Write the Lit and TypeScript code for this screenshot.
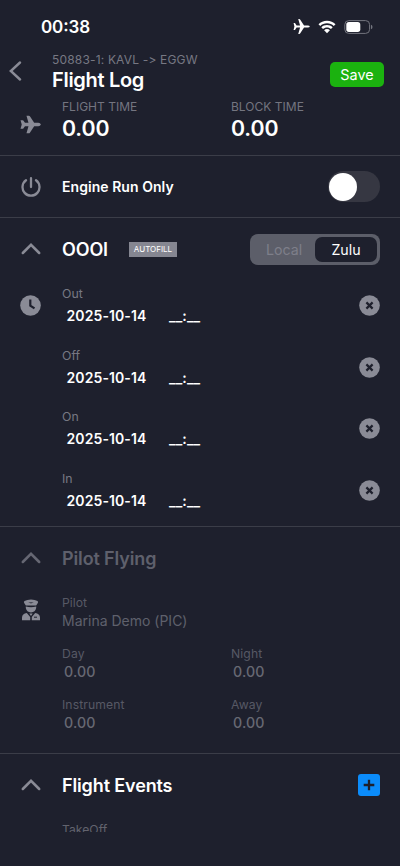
import { LitElement, html, svg, css } from "lit";
import { customElement, property, state } from "lit/decorators.js";

const plane = svg`<path d="M21 10H16.200L11.300 2.600Q10.900 2 10.200 2H7.400L9.700 10H5.700L3.800 7.500Q3.600 7.200 3.200 7.200H.6L2 12L.6 16.800H3.200Q3.600 16.800 3.800 16.500L5.700 14H9.700L7.400 22H10.200Q10.900 22 11.300 21.400L16.200 14H21Q23.200 13.700 23.900 12Q23.200 10.300 21 10Z"/>`;

const thinPlane = svg`<path d="M21 10.500H15.600L10 2Q9.600 1.400 8.900 1.400H7.400L10 10.500H5.100L3 7.300Q2.800 7 2.400 7H.8L2 12L.8 17H2.400Q2.800 17 3 16.700L5.100 13.500H10L7.400 22.600H8.900Q9.600 22.600 10 22L15.600 13.500H21Q23.200 13.300 23.800 12Q23.200 10.700 21 10.500Z"/>`;

const chevronUp = html`<svg class="chevron" viewBox="0 0 20 12"><path d="M1.800 10L10 1.800L18.200 10"/></svg>`;

@customElement("log-time")
export class LogTime extends LitElement {
  @property() label = "";
  @property() value = "";

  static styles = css`
    :host { display: block; }
    .label { font-size: 12.2px; line-height: 17px; letter-spacing: 0.1px; color: #575965; }
    .value { font-size: 14.2px; line-height: 20px; font-weight: 500; letter-spacing: 0.1px; padding-left: 2px; color: #676873; }
  `;

  render() {
    return html`<div class="label">${this.label}</div><div class="value">${this.value}</div>`;
  }
}

@customElement("app-root")
export class AppRoot extends LitElement {
  @state() zone = "Zulu";

  static styles = css`
    :host {
      display: flex;
      flex-direction: column;
      height: 866px;
      overflow: hidden;
      background: #1e202d;
      color: #fff;
      font-family: Inter, sans-serif;
      font-feature-settings: "calt" 0;
    }
    * { box-sizing: border-box; }
    svg { display: block; fill: #8a8b96; flex: none; }
    section { border-bottom: 1px solid #3b3d48; flex: none; }
    .status { display: flex; align-items: center; height: 53px; padding: 0 27px 0 41px; flex: none; }
    .clock { font-size: 17px; font-weight: 600; letter-spacing: -0.1px; flex: 1; font-feature-settings: "calt" 1; }
    .status svg { fill: #fff; }
    .plane-small { width: 17px; height: 17px; margin-right: 8px; }
    .wifi { width: 18px; height: 14px; margin-right: 8px; }
    .battery { width: 29px; height: 14px; }
    .battery .shell { fill: none; stroke: #74757f; }
    .battery .tip { fill: #74757f; }
    .header { display: flex; height: 47px; padding: 0 16px 0 9px; flex: none; }
    .back { width: 13px; height: 20px; margin: 8px 30px 0 0; fill: none; stroke: #8a8b96; stroke-width: 2.4; stroke-linecap: round; }
    .heading { flex: 1; }
    .sub { font-size: 12px; line-height: 14px; letter-spacing: 0.17px; color: #777883; white-space: nowrap; }
    .title { font-size: 20px; line-height: 26px; font-weight: 600; letter-spacing: -0.3px; }
    .save { width: 54px; height: 25px; margin-top: 8.500px; border-radius: 5px; background: #1bb20f; font-size: 14.4px; line-height: 25px; text-align: center; }
    .row { display: grid; grid-template-columns: 42px 1fr auto; padding: 0 20px; }
    .totals { height: 56px; }
    .totals svg { width: 21px; height: 21px; margin-top: 14px; }
    .pair { display: grid; grid-template-columns: 169px 1fr; }
    .caption { font-size: 12px; line-height: 14px; letter-spacing: 0.02px; color: #747580; }
    .total { font-size: 21.3px; line-height: 29px; font-weight: 600; letter-spacing: -0.1px; }
    .engine { height: 62px; align-items: center; }
    .power { width: 20px; height: 20px; margin-left: 1px; fill: none; stroke: #8a8b96; stroke-width: 2.3; stroke-linecap: round; }
    .engine-label { font-size: 14px; font-weight: 600; letter-spacing: 0.05px; }
    .switch { width: 52px; height: 31px; border-radius: 16px; background: #363742; padding: 1.500px 1px; }
    .knob { width: 28px; height: 28px; border-radius: 50%; background: #fff; }
    .head { height: 62px; align-items: center; }
    .chevron { width: 20px; height: 12px; margin-left: 1px; fill: none; stroke: #8a8b96; stroke-width: 2.5; stroke-linecap: round; }
    .section-title { display: flex; align-items: center; font-size: 18px; font-weight: 600; letter-spacing: -0.13px; }
    .autofill { width: 48px; height: 15px; margin-left: 21px; background: #858691; font-size: 8px; line-height: 15px; font-weight: 400; letter-spacing: 0; text-align: center; }
    .segments { display: flex; width: 130px; height: 31px; padding: 3px; border-radius: 8px; background: #5c5e69; font-size: 14.2px; line-height: 25px; text-align: center; }
    .segment { flex: 1; color: #7e7f8a; }
    .segment.on { flex: none; width: 62px; border-radius: 7px; background: #1e202d; color: #fff; }
    .oooi { height: 309px; }
    .event { height: 61.5px; }
    .event-icon { padding-top: 15px; }
    .disc { width: 21px; height: 21px; }
    .disc .mark { fill: none; stroke: #1e202d; stroke-width: 2.2; }
    .clear { padding-top: 15px; }
    .event-label { font-size: 12.3px; line-height: 17px; padding-top: 5px; color: #777883; }
    .stamp { display: grid; grid-template-columns: 102.5px 1fr; padding-left: 4.5px; font-size: 14px; line-height: 27px; font-weight: 600; letter-spacing: 0.1px; }
    .pilot { height: 227px; }
    .pilot .section-title { color: #5f606c; }
    .pilot .chevron { stroke: #666773; }
    .officer { width: 18px; height: 22px; margin: 10px 0 0 2px; }
    .who { padding-top: 6px; font-size: 12.2px; line-height: 16px; color: #575965; }
    .name { font-size: 14px; line-height: 19px; color: #5f606c; margin-bottom: 14.5px; }
    .grid { display: grid; grid-template-columns: 169px 1fr; row-gap: 14.3px; }
    .events { height: 78px; overflow: hidden; flex: none; }
    .add { width: 22px; height: 22px; fill: #0b8cfb; }
    .add .mark { fill: none; stroke: #1e202d; stroke-width: 2.3; }
    .takeoff { padding-left: 62px; margin-top: 5px; font-size: 12.2px; line-height: 17px; color: #62636e; }
  `;

  renderEvent(label: string, first: boolean) {
    return html`
      <div class="row event">
        <div class="event-icon">
          ${first
            ? html`<svg class="disc" viewBox="0 0 21 21"><circle cx="10.5" cy="10.5" r="10.3"/><path class="mark" d="M10.3 4.5V10.6L14.5 13.4"/></svg>`
            : ""}
        </div>
        <div>
          <div class="event-label">${label}</div>
          <div class="stamp"><span>2025-10-14</span><span>__:__</span></div>
        </div>
        <div class="clear">
          <svg class="disc" viewBox="0 0 21 21"><circle cx="10.5" cy="10.5" r="10.3"/><path class="mark" d="M7.4 7.4L13.6 13.6M13.6 7.4L7.4 13.6"/></svg>
        </div>
      </div>`;
  }

  render() {
    return html`
      <div class="status">
        <div class="clock">00:38</div>
        <svg class="plane-small" viewBox="0 0 24 24">${thinPlane}</svg>
        <svg class="wifi" viewBox="0 0 18 14">
          <path d="M9 .8C5.6.8 2.700 2.100.5 4.200L2.200 6C4 4.300 6.300 3.300 9 3.300S14 4.300 15.800 6L17.500 4.200C15.300 2.100 12.400.8 9 .8Z"/>
          <path d="M9 5C6.800 5 4.800 5.900 3.300 7.200L5 9C6.100 8 7.400 7.400 9 7.400S11.900 8 13 9L14.700 7.200C13.200 5.900 11.200 5 9 5Z"/>
          <path d="M9 9.100C7.900 9.100 6.900 9.500 6.100 10.200L9 13.200L11.900 10.200C11.100 9.500 10.100 9.100 9 9.100Z"/>
        </svg>
        <svg class="battery" viewBox="0 0 29 14">
          <rect class="shell" x=".8" y=".6" width="24.800" height="12.800" rx="4"/>
          <rect x="2.300" y="2.100" width="14" height="9.800" rx="2.600"/>
          <path class="tip" d="M27 4.800Q28.500 5.300 28.500 7T27 9.200Z"/>
        </svg>
      </div>

      <div class="header">
        <svg class="back" viewBox="0 0 13 20"><path d="M11 1.500L1.800 10L11 18.500"/></svg>
        <div class="heading">
          <div class="sub">50883-1: KAVL -&gt; EGGW</div>
          <div class="title">Flight Log</div>
        </div>
        <div class="save">Save</div>
      </div>

      <section class="row totals">
        <svg viewBox="0 0 24 24">${plane}</svg>
        <div class="pair">
          <div><div class="caption">FLIGHT TIME</div><div class="total">0.00</div></div>
          <div><div class="caption">BLOCK TIME</div><div class="total">0.00</div></div>
        </div>
      </section>

      <section class="row engine">
        <svg class="power" viewBox="0 0 20 20"><path d="M10 1.200V10M5 3.300A8.500 8.500 0 1 0 15 3.300"/></svg>
        <div class="engine-label">Engine Run Only</div>
        <div class="switch"><div class="knob"></div></div>
      </section>

      <section class="oooi">
        <div class="row head">
          ${chevronUp}
          <div class="section-title">OOOI<span class="autofill">AUTOFILL</span></div>
          <div class="segments">
            ${["Local", "Zulu"].map((z) => html`<div class="segment ${z === this.zone ? "on" : ""}">${z}</div>`)}
          </div>
        </div>
        ${["Out", "Off", "On", "In"].map((l, i) => this.renderEvent(l, i === 0))}
      </section>

      <section class="pilot">
        <div class="row head">
          ${chevronUp}
          <div class="section-title">Pilot Flying</div>
        </div>
        <div class="row">
          <svg class="officer" viewBox="0 0 18 22">
            <path d="M9 .5Q13 .8 15.500 2Q16.600 2.800 15.800 4L14.200 6.400H3.800L2.200 4Q1.400 2.800 2.500 2Q5 .8 9 .5ZM6.300 3L9 4.600L11.700 3L9 3.500Z" fill-rule="evenodd"/>
            <path d="M3.800 7.400Q9 9 14.200 7.400V9Q13.400 13.200 9 13.400Q4.600 13.200 3.800 9Z"/>
            <path d="M4.800 14L8.200 18V21.300H0V18.500Q.2 14.800 4.800 14ZM13.200 14L9.800 18V21.300H18V18.500Q17.800 14.800 13.200 14ZM7.300 14.500H10.700L9 17Z"/>
            <path d="M12 18.200H15" stroke="#1e202d"/>
          </svg>
          <div>
            <div class="who">Pilot</div>
            <div class="name">Marina Demo (PIC)</div>
            <div class="grid">
              ${["Day", "Night", "Instrument", "Away"].map((l) => html`<log-time label=${l} value="0.00"></log-time>`)}
            </div>
          </div>
        </div>
      </section>

      <div class="events">
        <div class="row head">
          ${chevronUp}
          <div class="section-title">Flight Events</div>
          <svg class="add" viewBox="0 0 22 22"><rect width="22" height="22" rx="3"/><path class="mark" d="M11 5.700V16.300M5.700 11H16.300"/></svg>
        </div>
        <div class="takeoff">TakeOff</div>
      </div>
    `;
  }
}
